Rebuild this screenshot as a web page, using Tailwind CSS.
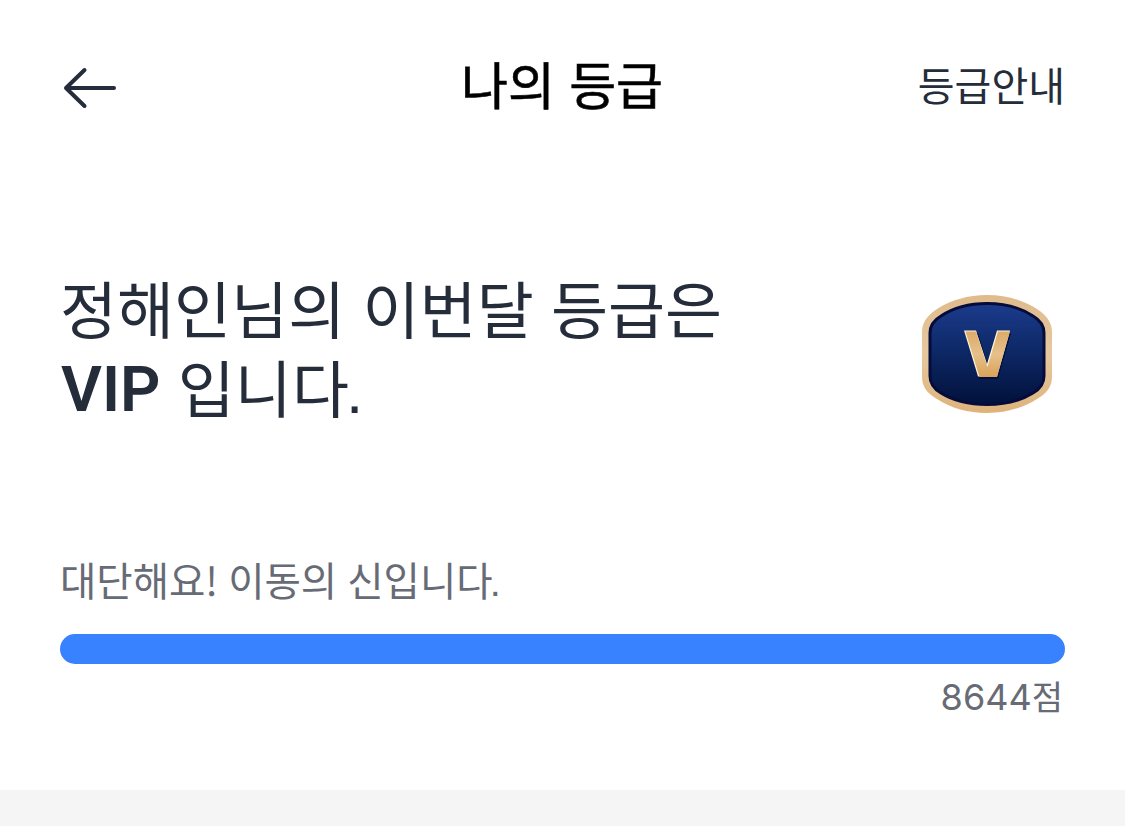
<!DOCTYPE html>
<html lang="ko">
<head>
    <meta charset="UTF-8">
    <meta name="viewport" content="width=device-width, initial-scale=1.0">
    <title>나의 등급</title>
    <script src="https://cdn.jsdelivr.net/npm/@tailwindcss/browser@4"></script>
</head>
<body class="bg-white font-['Noto_Sans_CJK_KR',sans-serif] text-[#252d3b]">
    <div class="w-[1125px] h-[832px] overflow-hidden">
        <header class="h-[172px] px-[60px] grid grid-cols-3 items-center">
            <button class="justify-self-start" aria-label="뒤로">
                <svg class="block w-[60px] h-[48px]" viewBox="0 0 60 48" fill="none" stroke="currentColor" stroke-width="4" stroke-linecap="round" stroke-linejoin="round">
                    <path d="M54 26H6M24.500 8L6 26L24.500 44"/>
                </svg>
            </button>
            <h1 class="justify-self-center pb-[7px] pr-px text-[51px] leading-[60px] font-normal text-black [-webkit-text-stroke:0.6px_#000]">나의 등급</h1>
            <a class="justify-self-end pb-[5px] text-[40px] leading-[48px]">등급안내</a>
        </header>

        <section class="h-[382px] pt-[96px] pl-[60px] pr-[73px] flex justify-between">
            <div class="text-[62px] leading-[79px]">
                <p>정해인님의 이번달 등급은</p>
                <p><b class="font-[Roboto] ml-px text-[63px] font-semibold leading-none align-[2px]">VIP</b><span> 입니다</span><span class="font-['Liberation_Sans'] -ml-[3px] leading-none">.</span></p>
            </div>
            <svg class="w-[130px] h-[118px] mt-[27px]" viewBox="0 0 130 118">
                <defs>
                    <linearGradient id="navy" x1="0" y1="0" x2="0" y2="1">
                        <stop offset="0" stop-color="#1b3b8c"/>
                        <stop offset="0.500" stop-color="#0d2764"/>
                        <stop offset="1" stop-color="#01113b"/>
                    </linearGradient>
                    <linearGradient id="frame" x1="0" y1="0" x2="0" y2="1">
                        <stop offset="0" stop-color="#dfbb8c"/>
                        <stop offset="0.500" stop-color="#e6c8a0"/>
                        <stop offset="1" stop-color="#deb37a"/>
                    </linearGradient>
                    <linearGradient id="gold" x1="0" y1="0" x2="0" y2="1">
                        <stop offset="0" stop-color="#dcab68"/>
                        <stop offset="0.500" stop-color="#e6c08b"/>
                        <stop offset="1" stop-color="#d9a259"/>
                    </linearGradient>
                </defs>
                <path fill="url(#frame)" d="M0 37C0 27 6 20 15 14C29 5 46 0 65 0S101 5 115 14C124 20 130 27 130 37V82C130 92 124 99 115 104C101 113 84 118 65 118S29 113 15 104C6 99 0 92 0 82Z"/>
                <path fill="url(#navy)" stroke="#050c3b" stroke-width="3" d="M8 38C8 30 12 25 19 21C31 13 47 8.500 65 8.500S99 13 111 21C118 25 122 30 122 38V81C122 89 118 94 111 98C99 105.500 83 109.500 65 109.500S31 105.500 19 98C12 94 8 89 8 81Z"/>
                <!-- V mark: shadow, highlight edge, face -->
                <path fill="#03103d" d="M43 38H56L66 71L76 38H89L76 84H57Z"/>
                <path fill="#fff3da" d="M42 35.500H54L65 69L75 35.500H88L75 81.500H56Z"/>
                <path fill="url(#gold)" d="M43.500 36.500H54L65.500 72L76 36.500H88L75 82H57.500Z"/>
            </svg>
        </section>

        <section class="h-[236px] px-[60px] flex flex-col text-[#676b75]">
            <p class="-mt-[3px] text-[39.500px] leading-[56px] [word-spacing:-1px]">대단해요! 이동의 신입니다<span class="font-['Liberation_Sans'] -ml-[3px] leading-none">.</span></p>
            <div class="mt-[27px] h-[30px] rounded-full bg-[#3881ff]"></div>
            <p class="mt-[7px] pr-[2px] text-right text-[34px] leading-[50px]"><span class="font-[Inter] text-[36px] leading-none">8644</span>점</p>
        </section>

        <div class="h-[36px] bg-[#f5f5f5]"></div>
    </div>
</body>
</html>
